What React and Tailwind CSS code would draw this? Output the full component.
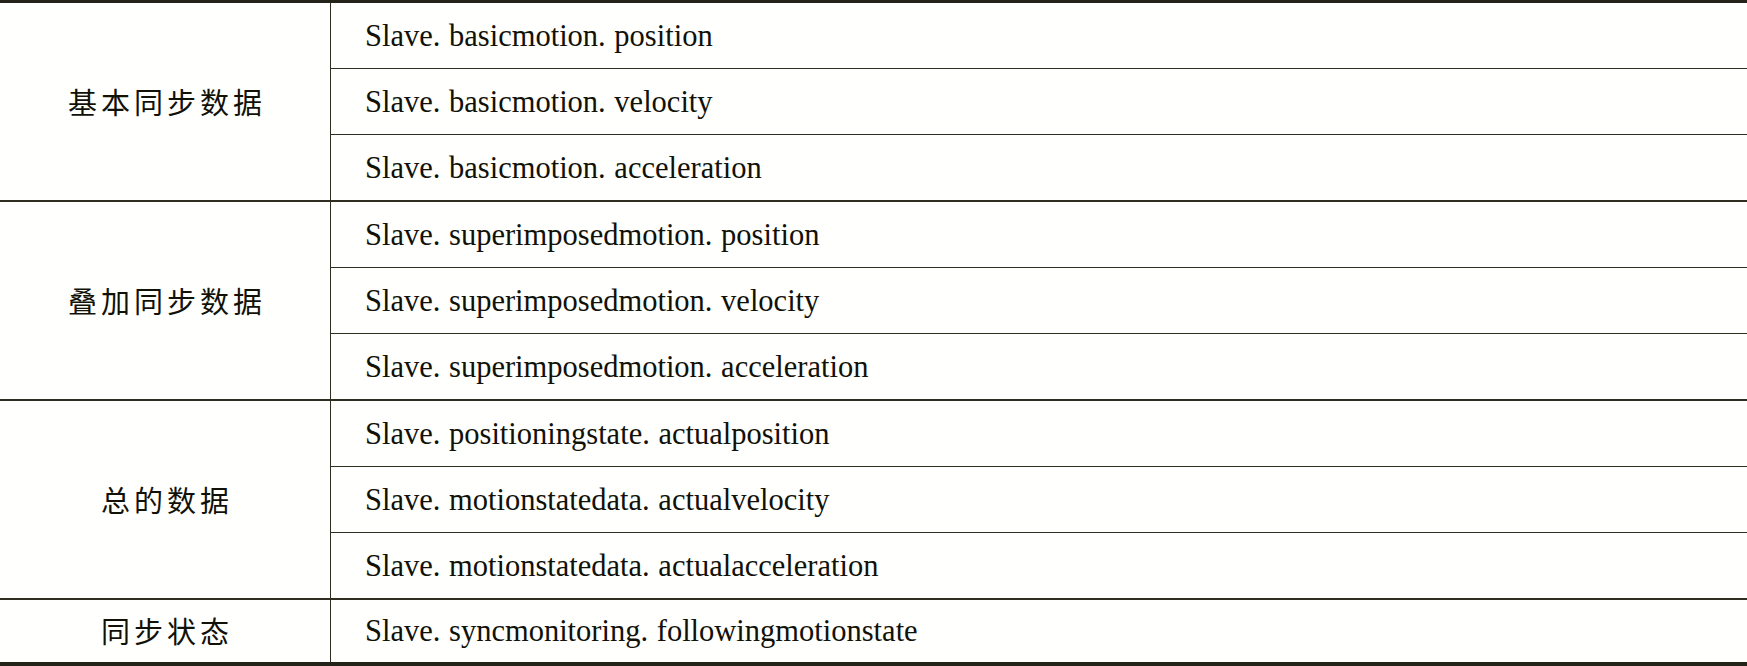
import React from 'react';

const groups = [
  {
    label: '基本同步数据',
    rows: [
      'Slave. basicmotion. position',
      'Slave. basicmotion. velocity',
      'Slave. basicmotion. acceleration',
    ],
  },
  {
    label: '叠加同步数据',
    rows: [
      'Slave. superimposedmotion. position',
      'Slave. superimposedmotion. velocity',
      'Slave. superimposedmotion. acceleration',
    ],
  },
  {
    label: '总的数据',
    rows: [
      'Slave. positioningstate. actualposition',
      'Slave. motionstatedata. actualvelocity',
      'Slave. motionstatedata. actualacceleration',
    ],
  },
  {
    label: '同步状态',
    rows: ['Slave. syncmonitoring. followingmotionstate'],
    last: true,
  },
];

const App = () => {
  return (
    <div className="w-[1747px] h-[666px] bg-[#fffffd] text-[#111108] border-t-[3px] border-b-[4px] border-[#24231a] overflow-hidden flex flex-col">
      {groups.map((group, gi) => (
        <div
          key={group.label}
          className={`flex ${gi > 0 ? 'border-t-2 border-[#2e2d20]' : ''} ${group.last ? 'flex-1' : ''}`}
        >
          {/* Left label cell */}
          <div className="w-[331px] shrink-0 flex items-center justify-center border-r border-[#2e2d20] font-['Noto_Sans_CJK_SC',sans-serif] text-[29px] tracking-[4px] pl-[4px]">
            {group.label}
          </div>

          {/* Right value rows */}
          <div className="flex-1 flex flex-col">
            {group.rows.map((row, ri) => (
              <div
                key={row}
                className={`flex items-center pl-[34px] pt-[2px] font-['Liberation_Serif',serif] text-[30.5px] [word-spacing:1px] ${
                  group.last ? 'flex-1' : ri === 0 ? 'h-[65px]' : 'h-[66px]'
                } ${ri > 0 ? 'border-t border-[#2e2d20]' : ''}`}
              >
                {row}
              </div>
            ))}
          </div>
        </div>
      ))}
    </div>
  );
};

export default App;
